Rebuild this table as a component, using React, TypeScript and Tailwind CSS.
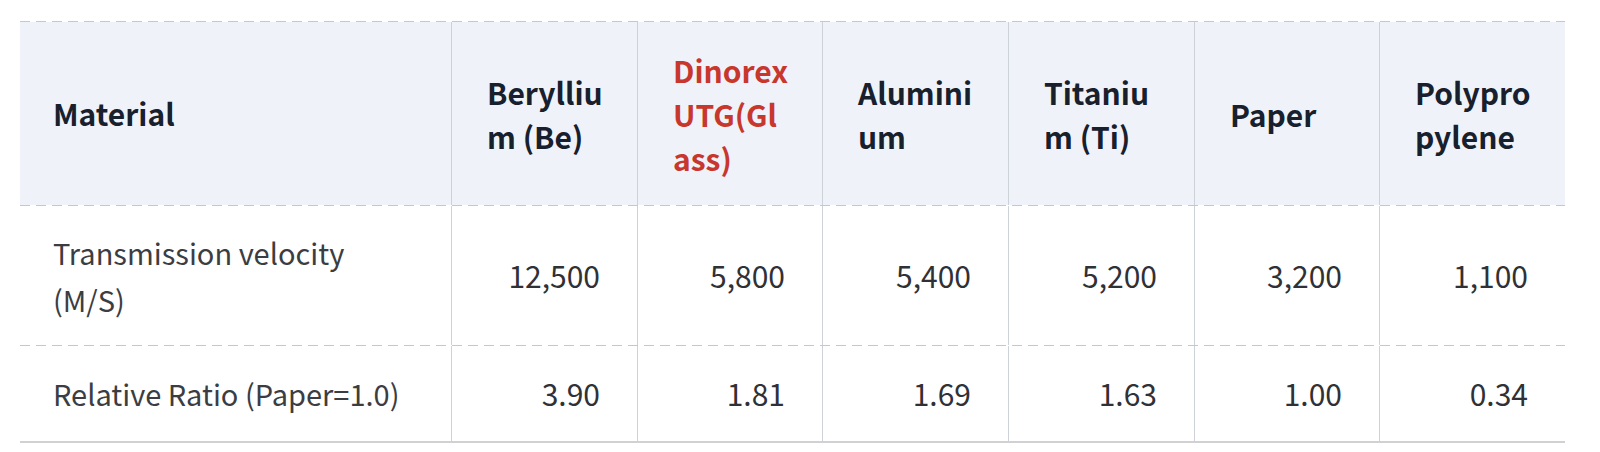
import React from "react";

const font = { fontFamily: '"Noto Sans CJK KR", "Noto Sans", sans-serif' };

function Dashed() {
  return (
    <div className="h-px w-full bg-[repeating-linear-gradient(to_right,#c4c8ce_0px,#c4c8ce_10px,transparent_10px,transparent_16px)]" />
  );
}

const gridCols =
  "grid grid-cols-[431px_186px_185px_186px_186px_185px_186px]";

const velocity = ["12,500", "5,800", "5,400", "5,200", "3,200", "1,100"];
const ratio = ["3.90", "1.81", "1.69", "1.63", "1.00", "0.34"];

function HeadCell(props: { lines: string[]; red?: boolean }) {
  return (
    <div
      className={`flex items-center border-l border-[#cdd1d8] pl-[35px] text-[30px] font-bold leading-[44px] ${
        props.red ? "text-[#c8372d]" : "text-[#18202e]"
      }`}
    >
      <div>
        {props.lines.map((l, i) => (
          <div key={i}>{l}</div>
        ))}
      </div>
    </div>
  );
}

function NumRow(props: { label: string[]; values: string[]; height: string }) {
  return (
    <div className={`${gridCols} ${props.height}`}>
      <div className="flex items-center pl-[33px] text-[29px] leading-[47px] text-[#3b3d42]">
        <div>
          {props.label.map((l, i) => (
            <div key={i}>{l}</div>
          ))}
        </div>
      </div>
      {props.values.map((v, i) => (
        <div
          key={v + i}
          className="flex items-center justify-end border-l border-[#cdd1d8] pr-[37px] text-[30px] text-[#2f3136]"
        >
          {v}
        </div>
      ))}
    </div>
  );
}

export default function App() {
  return (
    <div className="h-[452px] w-[1600px] overflow-hidden bg-white" style={font}>
      <div className="ml-[20px] w-[1545px] pt-[21px]">
        <Dashed />
        <div className={`${gridCols} h-[183px] bg-[#eff3f9]`}>
          <div className="flex items-center pl-[33px] text-[30px] font-bold text-[#18202e]">
            Material
          </div>
          <HeadCell lines={["Berylliu", "m (Be)"]} />
          <HeadCell lines={["Dinorex", "UTG(Gl", "ass)"]} red />
          <HeadCell lines={["Alumini", "um"]} />
          <HeadCell lines={["Titaniu", "m (Ti)"]} />
          <HeadCell lines={["Paper"]} />
          <HeadCell lines={["Polypro", "pylene"]} />
        </div>
        <Dashed />
        <NumRow
          label={["Transmission velocity", "(M/S)"]}
          values={velocity}
          height="h-[139px]"
        />
        <Dashed />
        <NumRow
          label={["Relative Ratio (Paper=1.0)"]}
          values={ratio}
          height="h-[95px]"
        />
        <div className="h-[2px] w-full bg-[#cfd1d4]" />
      </div>
    </div>
  );
}
